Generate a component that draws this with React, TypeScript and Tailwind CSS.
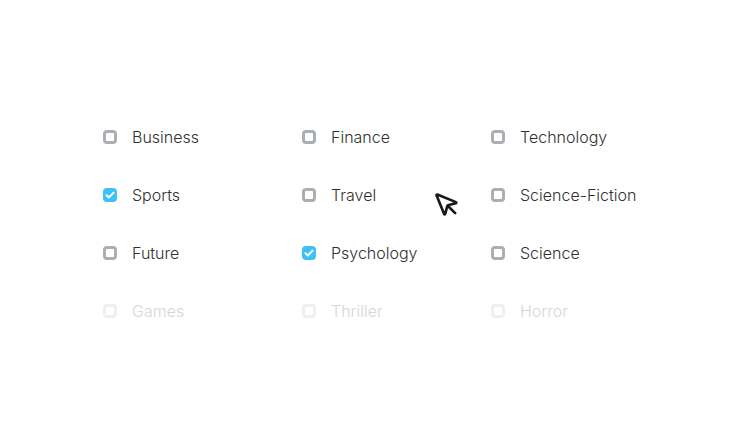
import React from "react";
import { MousePointer } from "lucide-react";

type Item = { label: string; checked?: boolean; disabled?: boolean };

const items: Item[] = [
  { label: "Business" },
  { label: "Finance" },
  { label: "Technology" },
  { label: "Sports", checked: true },
  { label: "Travel" },
  { label: "Science-Fiction" },
  { label: "Future" },
  { label: "Psychology", checked: true },
  { label: "Science" },
  { label: "Games", disabled: true },
  { label: "Thriller", disabled: true },
  { label: "Horror", disabled: true },
];

function Box({ checked, disabled }: { checked?: boolean; disabled?: boolean }) {
  if (checked) {
    return (
      <span className="flex h-[14px] w-[14px] shrink-0 items-center justify-center rounded-[4px] bg-[#3fc1f7]">
        <svg width="10" height="10" viewBox="0 0 10 10" fill="none">
          <path d="M1.5 5.2l2.3 2.3L8.6 2.6" stroke="white" strokeWidth="2" strokeLinecap="round" strokeLinejoin="round" />
        </svg>
      </span>
    );
  }
  return (
    <span
      className={
        disabled
          ? "block h-[14px] w-[14px] shrink-0 rounded-[4px] border-[3px] border-solid border-[#efefef]"
          : "block h-[14px] w-[14px] shrink-0 rounded-[4px] border-[3px] border-solid border-[#abafb4]"
      }
    />
  );
}

export default function App() {
  return (
    <div className="relative h-[446px] w-[735px] bg-white" style={{ fontFamily: "Inter, sans-serif" }}>
      <div className="grid grid-cols-[199px_189px_auto] gap-y-[34px] pl-[103px] pt-[125px]">
        {items.map((it) => (
          <label key={it.label} className="flex h-6 items-center gap-[15px]">
            <Box checked={it.checked} disabled={it.disabled} />
            <span
              className={
                it.disabled
                  ? "text-[16px] font-light text-[#d6d6d6]"
                  : "text-[16px] font-light text-[#303030]"
              }
            >
              {it.label}
            </span>
          </label>
        ))}
      </div>

      {/* cursor */}
      <MousePointer className="absolute left-[433px] top-[191px] text-[#1a1a1a]" size={28} strokeWidth={2.3} />
    </div>
  );
}
